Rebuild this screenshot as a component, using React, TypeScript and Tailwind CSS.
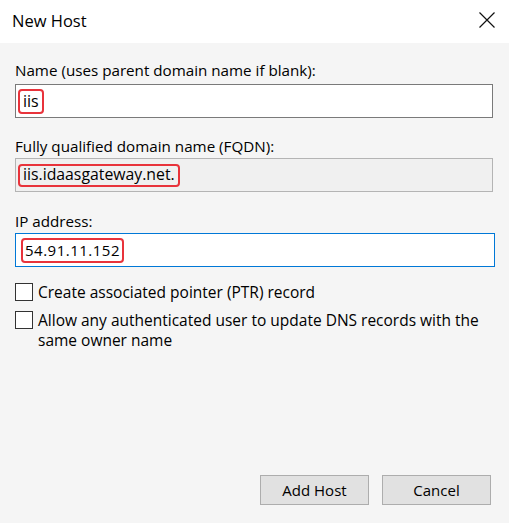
const font = { fontFamily: '"Segoe UI", "Open Sans", "Noto Sans", sans-serif' };

const Mark: React.FC<{ children: React.ReactNode; className?: string }> = ({ children, className }) => (
  <span
    className={`inline-flex items-center border-2 border-[#e8333b] rounded-[4px] px-[3px] ${className ?? ""}`}
  >
    {children}
  </span>
);

const Check: React.FC<{ children: React.ReactNode }> = ({ children }) => (
  <div className="flex items-start gap-[5px]">
    <div className="w-[18px] h-[18px] shrink-0 border border-[#333333] bg-white" />
    <div className="text-[15.5px] leading-[20px] -mt-[1px] text-black">{children}</div>
  </div>
);

export default function App() {
  return (
    <div className="w-[509px] h-[523px] flex flex-col bg-[#f5f5f5] text-black" style={font}>
      {/* title bar */}
      <div className="h-[43px] shrink-0 bg-white flex items-center justify-between pl-[12px] pr-[14px]">
        <span className="text-[16.5px] leading-[20px] -mt-[1px]">New Host</span>
        <svg width="16" height="16" viewBox="0 0 16 16" className="-mt-[4px]">
          <path d="M0.5 0.5 L15.5 15.5 M15.5 0.5 L0.5 15.5" stroke="#111" strokeWidth="1.2" fill="none" />
        </svg>
      </div>

      <div className="flex-1 flex flex-col pl-[15px] pr-[16px] pt-[17px] pb-[18px]">
        <label className="text-[15.2px] leading-[20px] mb-[4px]">Name (uses parent domain name if blank):</label>
        <div className="h-[34px] bg-white border border-[#7a7a7a] flex items-center pl-[2px]">
          <Mark className="h-[25px] text-[16px]">iis</Mark>
        </div>

        <label className="text-[15.2px] leading-[20px] mt-[18px] mb-[2px]">Fully qualified domain name (FQDN):</label>
        <div className="h-[34px] bg-[#f0f0f0] border border-[#b4b4b4] flex items-center pl-[2px]">
          <Mark className="h-[23px] text-[15.8px]">iis.idaasgateway.net.</Mark>
        </div>

        <label className="text-[15.2px] leading-[20px] mt-[19px] mb-[2px]">IP address:</label>
        <div className="h-[34px] bg-white border border-[#0078d7] flex items-center pl-[5px] mr-[-2px]">
          <Mark className="h-[25px] text-[15px] tracking-[0.5px] pl-[2px] pr-[2px]">54.91.11.152</Mark>
        </div>

        <div className="flex flex-col gap-[9px] mt-[16px]">
          <Check>Create associated pointer (PTR) record</Check>
          <Check>
            Allow any authenticated user to update DNS records with the
            <br />
            same owner name
          </Check>
        </div>

        <div className="mt-auto flex justify-end gap-[13px] pr-[2px]">
          <button className="w-[109px] h-[30px] bg-[#e1e1e1] border border-[#adadad] text-[15px]">Add Host</button>
          <button className="w-[109px] h-[30px] bg-[#e1e1e1] border border-[#adadad] text-[15px]">Cancel</button>
        </div>
      </div>
    </div>
  );
}
